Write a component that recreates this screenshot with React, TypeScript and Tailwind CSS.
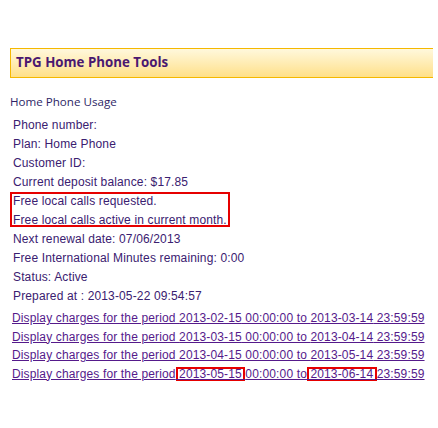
const infoTop = [
  'Phone number:',
  'Plan: Home Phone',
  'Customer ID:',
  'Current deposit balance: $17.85',
]

const highlighted = [
  'Free local calls requested.',
  'Free local calls active in current month.',
]

const infoBottom = [
  'Next renewal date: 07/06/2013',
  'Free International Minutes remaining: 0:00',
  'Status: Active',
  'Prepared at : 2013-05-22 09:54:57',
]

const periods = [
  ['2013-02-15', '2013-03-14'],
  ['2013-03-15', '2013-04-14'],
  ['2013-04-15', '2013-05-14'],
]

function Marked({ children }: { children: string }) {
  return <span className="shadow-[inset_0_0_0_2px_#e60000]">{children}</span>
}

export default function App() {
  return (
    <div className="min-h-[428px] bg-white pt-[48px] pl-[10px] pr-[5px] font-['Liberation_Sans',Arial,sans-serif] text-[12px] tracking-[0.14px] text-[#3a2070]">
      <div className="flex h-[30px] items-center border-y border-l border-[#f5b800] bg-gradient-to-b from-[#fff8dc] to-[#ffe088] pl-[5px]">
        <h1 className="font-['Open_Sans',sans-serif] text-[13.3px] font-bold tracking-normal text-[#4a1870]">
          TPG Home Phone Tools
        </h1>
      </div>

      <h2 className="mt-[16px] font-['Open_Sans',sans-serif] text-[11.6px] leading-[16px] tracking-normal text-[#2e1f66]">
        Home Phone Usage
      </h2>

      <div className="mt-[6px] leading-[19px]">
        {infoTop.map((line) => (
          <div key={line} className="pl-[3px]">
            {line}
          </div>
        ))}
        <div className="relative">
          {highlighted.map((line) => (
            <div key={line} className="pl-[3px]">
              {line}
            </div>
          ))}
          <span className="pointer-events-none absolute left-0 top-0 h-[35px] w-[220px] border-2 border-[#e60000]" />
        </div>
        {infoBottom.map((line) => (
          <div key={line} className="pl-[3px]">
            {line}
          </div>
        ))}
      </div>

      <div className="mt-[3px] pl-[2px] leading-[18.5px]">
        {periods.map(([from, to]) => (
          <div key={from}>
            <a href="#" className="text-[#551a8b] underline">
              Display charges for the period {from} 00:00:00 to {to} 23:59:59
            </a>
          </div>
        ))}
        <div>
          <a href="#" className="text-[#551a8b] underline">
            Display charges for the period<Marked> 2013-05-15 </Marked>00:00:00 to<Marked> 2013-06-14 </Marked>23:59:59
          </a>
        </div>
      </div>
    </div>
  )
}
